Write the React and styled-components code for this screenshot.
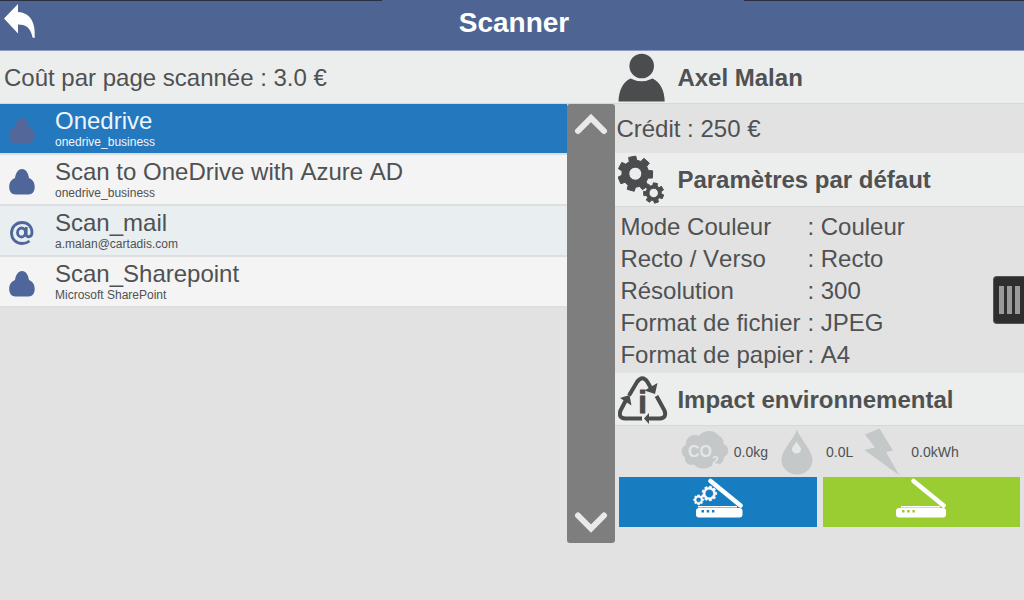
import React, { useState } from "react";
import styled, { createGlobalStyle } from "styled-components";

const GlobalStyle = createGlobalStyle`
  * {
    box-sizing: border-box;
  }

  body {
    margin: 0;
    background: #e2e2e2;
    color: #4f5152;
    font-family: "Liberation Sans", Arial, sans-serif;
    font-size: 24px;
    font-kerning: none;
  }

  button {
    border: none;
    padding: 0;
    background: none;
    font: inherit;
    font-kerning: none;
    color: inherit;
    cursor: pointer;
  }

  svg {
    display: block;
  }
`;

const Page = styled.div`
  position: relative;
  min-height: 100vh;
  overflow: hidden;
`;

const TopBar = styled.header`
  display: grid;
  grid-template-columns: 1fr auto 1fr;
  align-items: start;
  height: 51px;
  padding-left: 4px;
  border-bottom: 1px solid #8c9cc2;
  background: linear-gradient(to right, #2a3040 37.3%, transparent 37.3%, transparent 72.7%, #2a3040 72.7%)
      0 0 / 100% 1px no-repeat,
    #4e6593;
`;

const BackButton = styled.button`
  justify-self: start;
  padding-top: 4px;
`;

const Title = styled.h1`
  margin: 0;
  color: #fff;
  font-size: 28px;
  line-height: 46px;
`;

const Columns = styled.div`
  display: grid;
  grid-template-columns: 1fr calc(40% - 1px);
`;

const Band = styled.div`
  display: flex;
  align-items: center;
  height: ${(p) => p.$height || 53}px;
  padding-left: ${(p) => p.$indent || 0}px;
  border-bottom: 1px solid #d6d8d8;
  background: #ebeeed;
  line-height: 28px;
`;

const BandText = styled.span`
  padding-top: 2px;
`;

const ListArea = styled.div`
  display: flex;
  align-items: flex-start;
`;

const Destinations = styled.ul`
  flex: 1;
  margin: 0;
  padding: 0;
  list-style: none;
`;

const Destination = styled.button`
  display: flex;
  align-items: center;
  width: 100%;
  height: 51px;
  padding-left: 9px;
  gap: 20px;
  text-align: left;
  border-bottom: 2px solid #dcdedf;
  background: ${(p) => (p.$selected ? "#2378be" : p.$tinted ? "#e9eef1" : "#f4f4f4")};
  color: ${(p) => (p.$selected ? "#eef5fb" : "inherit")};
`;

const DestinationIcon = styled.span`
  width: 26px;
  padding-top: 4px;
  color: ${(p) => (p.$selected ? "#54679a" : "#4e6699")};
`;

const DestinationText = styled.span`
  display: flex;
  flex-direction: column;
  padding-bottom: 2px;
`;

const DestinationName = styled.span`
  line-height: 28px;
`;

const DestinationDetail = styled.span`
  font-size: 12px;
  line-height: 14px;
`;

const Scroller = styled.div`
  display: flex;
  flex-direction: column;
  justify-content: space-between;
  align-items: center;
  width: 48px;
  height: calc(100vh - 161px);
  padding: 9px 0;
  border-radius: 3px;
  background: #7e7e7e;
`;

const SectionTitle = styled.h2`
  margin: 0;
  padding-top: 1px;
  font-size: 24px;
`;

const SectionIcon = styled.span`
  width: 59px;
`;

const Credit = styled.p`
  display: flex;
  align-items: center;
  height: 49px;
  margin: 0;
  padding-left: 1px;
`;

const Settings = styled.dl`
  display: grid;
  grid-template-columns: 187px 1fr;
  margin: 0;
  padding: 4px 0 2px 5px;
  line-height: 32px;

  dt,
  dd {
    margin: 0;
    white-space: nowrap;
  }
`;

const Impact = styled.div`
  display: flex;
  justify-content: center;
  align-items: center;
  gap: 5px;
  height: 51px;
  font-size: 14px;
`;

const Actions = styled.div`
  display: grid;
  grid-template-columns: 1fr 1fr;
  gap: 6px;
  padding: 0 4px;
`;

const ActionButton = styled.button`
  display: flex;
  justify-content: center;
  height: 50px;
  background: ${(p) => p.$color};
`;

const Drawer = styled.button`
  position: absolute;
  top: 46%;
  right: 0;
  display: flex;
  justify-content: center;
  align-items: center;
  gap: 3px;
  width: 31px;
  height: 48px;
  border: 1px solid #555;
  border-right: none;
  border-radius: 4px 0 0 4px;
  background: #2e2e2e;
`;

const DrawerBar = styled.span`
  width: 5px;
  height: 28px;
  background: #9a9a9a;
`;

// outline of a cog wheel with a hole in the middle
function cogPath(cx, cy, outer, inner, hole, teeth, turn = 0) {
  const step = (Math.PI * 2) / teeth;
  const at = (r, a) => `${(cx + r * Math.cos(a)).toFixed(2)} ${(cy + r * Math.sin(a)).toFixed(2)}`;
  const points = [];
  for (let i = 0; i < teeth; i++) {
    const a = i * step + turn;
    points.push(at(inner, a - step * 0.32), at(outer, a - step * 0.23), at(outer, a + step * 0.23), at(inner, a + step * 0.32));
  }
  return `M${points.join("L")}Z M${cx - hole} ${cy}a${hole} ${hole} 0 1 0 ${hole * 2} 0a${hole} ${hole} 0 1 0 ${-hole * 2} 0Z`;
}

const BackIcon = () => (
  <svg width="32" height="35" viewBox="0 0 32 35" fill="#fff">
    <path d="M0 14.500L14 0V8C25 8.500 32 17 30.700 34L28.500 33.500C27 25 23 20.500 14 20.500V29.500Z" />
  </svg>
);

const CloudIcon = () => (
  <svg width="26" height="26" viewBox="0 0 26 26" fill="currentColor">
    <path d="M13 0C17 0 19.200 4 20 9C24 10.500 25.700 14 25.700 18C25.700 22.500 23.500 25.500 19.500 25.500H6.500C2.500 25.500 0.200 22.500 0.200 18C0.200 14 2 10.500 6 9C6.800 4 9 0 13 0Z" />
  </svg>
);

const AtIcon = () => (
  <svg width="26" height="26" viewBox="0 0 26 26" fill="none" stroke="currentColor" strokeWidth="2.800">
    <ellipse cx="12.500" cy="12.500" rx="4" ry="4.500" />
    <path d="M17.200 7V14.500C17.200 18 23 17.500 23 12.500C23 6.500 19 2.500 13 2.500C7 2.500 2.500 7 2.500 13C2.500 19 7 23.500 13 23.500C16 23.500 18.500 22.700 20.500 21" />
  </svg>
);

const Chevron = ({ down }) => (
  <svg width="34" height="22" viewBox="0 0 34 22" fill="none" stroke="#e9e9ea" strokeWidth="6" strokeLinecap="round">
    <path d={down ? "M4 3.500L17 16.500L30 3.500" : "M4 18L17 5L30 18"} />
  </svg>
);

const UserIcon = () => (
  <svg width="48" height="49" viewBox="0 0 48 49" fill="#4b4c4d">
    <circle cx="23.700" cy="13" r="12.300" />
    <path d="M0.500 48.500C1 37 5 29 12.500 25.500Q23.500 31 34.500 25.500C42 29 46.500 37 46.700 48.500Z" />
  </svg>
);

const GearsIcon = () => (
  <svg width="48" height="49" viewBox="0 0 48 49" fill="#4b4c4d" stroke="#4b4c4d" strokeLinejoin="round" fillRule="evenodd">
    <path d={cogPath(17.3, 18.7, 17.6, 13.5, 6.5, 7, -1.75)} />
    <path d={cogPath(35.7, 38, 10.2, 7.6, 4.7, 7, -1.4)} />
  </svg>
);

const RecycleIcon = () => (
  <svg width="50" height="49" viewBox="0 0 50 49" fill="none" stroke="#4b4c4d" strokeWidth="4">
    <path d="M11 20.500L19 7Q24.500 -0.500 29.500 7L34 15" />
    <path d="M38.500 21L46.500 35.500Q49 43 42 43.500H31" />
    <path d="M24 43.500H7Q0 43 2.500 35.500L8 25" />
    <g fill="#4b4c4d" stroke="none">
      <path d="M26.500 15.500L37 19L39.500 8Z" />
      <path d="M2 23L11.500 20L13.500 30.500Z" />
      <path d="M26 43.500L31 38V49Z" />
      <text x="24.500" y="37.500" textAnchor="middle" fontSize="31" fontWeight="bold" stroke="#4b4c4d" strokeWidth="1">
        i
      </text>
    </g>
  </svg>
);

const Co2Icon = () => (
  <svg width="48" height="48" viewBox="0 0 48 48" fill="#c5c8c8">
    <path d="M5 17C4 10 11 5 18 8C22 2 33 1 37 7C41 9 43 12 42.500 16C48.500 18 49 26 43 29C43 35 38 38 33 36C27 42 17 42 13 36.500C7 38 3 34 4 29C-1 26 -0.500 19 5 17Z" />
    <g fill="#e4e6e6" fontWeight="bold">
      <text x="7" y="29" fontSize="16">
        CO
      </text>
      <text x="31" y="37" fontSize="12">
        2
      </text>
    </g>
  </svg>
);

const DropIcon = () => (
  <svg width="48" height="48" viewBox="0 0 48 48" fill="#c5c8c8">
    <path d="M24 1.500C27 11 39.500 22 39.500 32A15.500 14.500 0 0 1 8.500 32C8.500 22 21 11 24 1.500Z" />
    <path d="M23.500 13C25 17 28 18.500 28 21.500A4.500 4 0 0 1 19 21.500C19 18.500 22 17 23.500 13Z" fill="#e6e8e8" />
  </svg>
);

const BoltIcon = () => (
  <svg width="48" height="48" viewBox="0 0 48 48" fill="#c5c8c8">
    <path d="M7 6.500L21.500 0.500L35 22.500L28 24L41.500 47.500L6.500 22L17 19.500Z" />
  </svg>
);

const ScannerIcon = ({ hole, gears }) => (
  <svg width="50" height="42" viewBox="0 0 50 42" fill="#fff" fillRule="evenodd">
    <path d="M17.500 4L47.500 28.500" stroke="#fff" strokeWidth="4.500" strokeLinecap="round" />
    <rect x="5" y="29" width="39" height="1.500" />
    <rect x={gears ? 3 : 0} y="31" width={gears ? 46.5 : 50} height="9.500" rx="3" />
    {[0, 1, 2].map((i) => (
      <rect key={i} x={(gears ? 8.5 : 6) + i * 5.2} y="33" width="2.500" height="2.500" fill={hole} />
    ))}
    {gears && (
      <g stroke="#fff" strokeWidth="0.600">
        <path d={cogPath(16.3, 16.5, 7.5, 6, 4.2, 9)} />
        <path d={cogPath(5.6, 22.8, 5, 4, 2.6, 8)} />
      </g>
    )}
  </svg>
);

const destinations = [
  { name: "Onedrive", detail: "onedrive_business", icon: CloudIcon },
  { name: "Scan to OneDrive with Azure AD", detail: "onedrive_business", icon: CloudIcon },
  { name: "Scan_mail", detail: "a.malan@cartadis.com", icon: AtIcon },
  { name: "Scan_Sharepoint", detail: "Microsoft SharePoint", icon: CloudIcon },
];

const settings = [
  ["Mode Couleur", "Couleur"],
  ["Recto / Verso", "Recto"],
  ["Résolution", "300"],
  ["Format de fichier", "JPEG"],
  ["Format de papier", "A4"],
];

function App() {
  const [selected, setSelected] = useState(0);

  return (
    <Page>
      <GlobalStyle />
      <TopBar>
        <BackButton aria-label="Retour">
          <BackIcon />
        </BackButton>
        <Title>Scanner</Title>
      </TopBar>

      <Columns>
        <main>
          <Band $indent={4}>
            <BandText>Coût par page scannée : 3.0 €</BandText>
          </Band>
          <ListArea>
            <Destinations>
              {destinations.map(({ name, detail, icon: Icon }, i) => (
                <li key={name}>
                  <Destination $selected={i === selected} $tinted={i % 2 === 0} onClick={() => setSelected(i)}>
                    <DestinationIcon $selected={i === selected}>
                      <Icon />
                    </DestinationIcon>
                    <DestinationText>
                      <DestinationName>{name}</DestinationName>
                      <DestinationDetail>{detail}</DestinationDetail>
                    </DestinationText>
                  </Destination>
                </li>
              ))}
            </Destinations>
            <Scroller>
              <button aria-label="Monter">
                <Chevron />
              </button>
              <button aria-label="Descendre">
                <Chevron down />
              </button>
            </Scroller>
          </ListArea>
        </main>

        <aside>
          <Band $indent={3}>
            <SectionIcon>
              <UserIcon />
            </SectionIcon>
            <SectionTitle>Axel Malan</SectionTitle>
          </Band>
          <Credit>Crédit : 250 €</Credit>
          <Band $indent={3} $height={54}>
            <SectionIcon>
              <GearsIcon />
            </SectionIcon>
            <SectionTitle>Paramètres par défaut</SectionTitle>
          </Band>
          <Settings>
            {settings.map(([label, value]) => (
              <React.Fragment key={label}>
                <dt>{label}</dt>
                <dd>: {value}</dd>
              </React.Fragment>
            ))}
          </Settings>
          <Band $indent={3}>
            <SectionIcon>
              <RecycleIcon />
            </SectionIcon>
            <SectionTitle>Impact environnemental</SectionTitle>
          </Band>
          <Impact>
            <Co2Icon />
            <span>0.0kg</span>
            <DropIcon />
            <span>0.0L</span>
            <BoltIcon />
            <span>0.0kWh</span>
          </Impact>
          <Actions>
            <ActionButton $color="#177cc0" aria-label="Paramètres de numérisation">
              <ScannerIcon hole="#177cc0" gears />
            </ActionButton>
            <ActionButton $color="#9acd32" aria-label="Numériser">
              <ScannerIcon hole="#9acd32" />
            </ActionButton>
          </Actions>
        </aside>
      </Columns>

      <Drawer aria-label="Ouvrir le menu">
        <DrawerBar />
        <DrawerBar />
        <DrawerBar />
      </Drawer>
    </Page>
  );
}

export default App;
